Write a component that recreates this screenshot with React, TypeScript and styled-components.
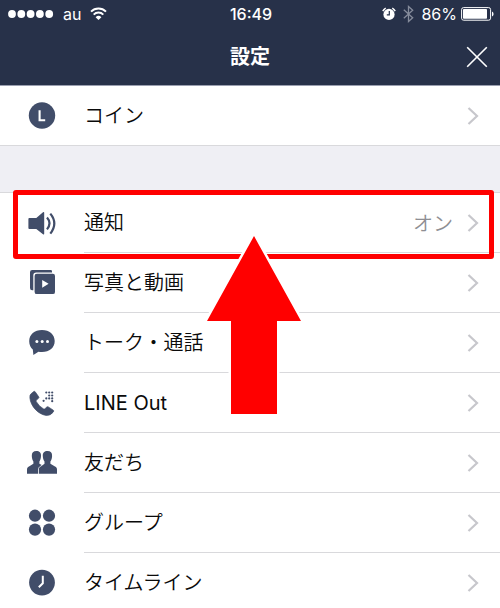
import React from "react";
import styled, { createGlobalStyle } from "styled-components";

const navy = "#273149";
const ink = "#414d69";
const line = "#d9d9dc";
const alertRed = "#ff0000";

const GlobalStyle = createGlobalStyle`
  *, *::before, *::after { box-sizing: border-box; }
  body {
    margin: 0;
    background: #fff;
    color: #0a0a0a;
    font-family: Inter, "Noto Sans CJK JP", sans-serif;
  }
`;

const Screen = styled.div`
  display: flex;
  flex-direction: column;
  height: 100vh;
  overflow: hidden;
`;

const Header = styled.header`
  flex: none;
  background: ${navy};
  color: #fff;
  border-bottom: 1px solid #9a9fb0;
`;

const StatusBar = styled.div`
  display: grid;
  grid-template-columns: 1fr auto 1fr;
  align-items: center;
  height: 28px;
  padding: 0 6px 0 8px;
  font-size: 16px;
  line-height: 20px;
`;

const StatusGroup = styled.div<{ $end?: boolean }>`
  display: flex;
  align-items: center;
  justify-content: ${(p) => (p.$end ? "flex-end" : "flex-start")};
  gap: ${(p) => (p.$end ? "7px" : "9px")};
`;

const BatteryLevel = styled.span`
  display: flex;
  align-items: center;
  gap: 4px;
`;

const Clock = styled.time`
  font-weight: 500;
`;

const TitleBar = styled.div`
  display: grid;
  grid-template-columns: 1fr auto 1fr;
  align-items: center;
  height: 57px;
  padding: 0 12px;
`;

const Title = styled.h1`
  grid-column: 2;
  margin: 0;
  font-size: 20px;
  line-height: 28px;
  font-weight: 700;
`;

const CloseButton = styled.button`
  justify-self: end;
  display: flex;
  padding: 0;
  border: 0;
  background: none;
  color: inherit;
`;

const Content = styled.main`
  flex: 1;
  min-height: 0;
  overflow: hidden;
  background: #efeff4;
`;

const Section = styled.ul`
  margin: 0 0 46px;
  padding: 0;
  list-style: none;
  background: #fff;
`;

const TopRule = styled.div`
  height: 1px;
  background: ${line};
`;

const Item = styled.li`
  position: relative;
`;

const RowButton = styled.button`
  display: flex;
  align-items: stretch;
  width: 100%;
  height: 60px;
  padding: 0;
  border: 0;
  background: none;
  color: inherit;
  font: inherit;
  font-size: 20px;
  line-height: 28px;
  text-align: left;
`;

const IconCell = styled.span<{ $ruled?: boolean }>`
  flex: none;
  display: flex;
  align-items: center;
  justify-content: center;
  width: 84px;
  border-bottom: 1px solid ${(p) => (p.$ruled ? line : "transparent")};
`;

const RowBody = styled.span`
  flex: 1;
  display: flex;
  align-items: center;
  gap: 14px;
  padding-right: 21px;
  border-bottom: 1px solid ${line};
`;

const Label = styled.span`
  flex: 1;
  font-family: Inter, "Noto Sans CJK JP DemiLight", "Noto Sans CJK JP", sans-serif;
`;

const Value = styled.span`
  color: #8e8e93;
  font-family: "Noto Sans CJK JP DemiLight", "Noto Sans CJK JP", sans-serif;
`;

const Highlight = styled.div`
  position: absolute;
  z-index: 1;
  top: -3px;
  bottom: -6px;
  left: 13px;
  right: 6px;
  border: 5px solid ${alertRed};
  border-radius: 3px;
  pointer-events: none;
`;

const Pointer = styled.svg`
  position: absolute;
  z-index: 2;
  top: 37px;
  left: calc(50% - 50px);
  pointer-events: none;
`;

const Wifi = () => (
  <svg width="17" height="14" viewBox="0 0 17 14" fill="none" stroke="#fff" strokeWidth="2" aria-label="Wi-Fi">
    <path d="M1 4.600a10.700 10.700 0 0 1 15 0" />
    <path d="M3.700 7.600a6.800 6.800 0 0 1 9.600 0" />
    <path d="M8.500 13 5.600 10.200a4.200 4.200 0 0 1 5.800 0z" fill="#fff" stroke="none" />
  </svg>
);

const Signal = () => (
  <svg width="46" height="8" viewBox="0 0 46 8" fill="#fff" aria-label="signal">
    {[4, 13.3, 22.6, 31.9, 41.2].map((x) => (
      <circle key={x} cx={x} cy="4" r="3.900" />
    ))}
  </svg>
);

const Alarm = () => (
  <svg width="14" height="14" viewBox="0 0 14 14" aria-label="alarm">
    <circle cx="7" cy="7.400" r="5.600" fill="#fff" />
    <path d="M.8 4.200A7 7 0 0 1 3.700 1.200M10.300 1.200a7 7 0 0 1 2.900 3" fill="none" stroke="#fff" strokeWidth="1.500" />
    <path d="M7.300 4v3.800H4.800" fill="none" stroke={navy} strokeWidth="1.200" />
  </svg>
);

const Bluetooth = () => (
  <svg width="11" height="18" viewBox="0 0 11 18" fill="none" stroke="#858b9b" strokeWidth="1.300" aria-label="Bluetooth">
    <path d="M.8 4.800 9.700 12.700 5.500 16.500V1.500l4.200 3.800-8.900 7.900" />
  </svg>
);

const Battery = () => (
  <svg width="33" height="14" viewBox="0 0 33 14" aria-label="battery">
    <rect x=".6" y=".6" width="29" height="12.600" rx="2" fill="none" stroke="#fff" />
    <rect x="2" y="2" width="24" height="9.800" rx=".8" fill="#fff" />
    <path d="M31 4.600q1.600.6 1.600 2.400T31 9.400z" fill="#fff" />
  </svg>
);

const Cross = () => (
  <svg width="22" height="22" viewBox="0 0 22 22" fill="none" stroke="#fff" strokeWidth="1.600">
    <path d="m1.200 1.200 19.600 19.600M20.800 1.200 1.200 20.800" />
  </svg>
);

const Chevron = () => (
  <svg width="12" height="18" viewBox="0 0 12 18" fill="none" stroke="#c7c7cc" strokeWidth="2.200">
    <path d="m1.500 1 8.500 8-8.500 8" />
  </svg>
);

const IconSvg = ({ children }: { children: React.ReactNode }) => (
  <svg width="30" height="30" viewBox="0 0 30 30" fill={ink} aria-hidden="true">
    {children}
  </svg>
);

const CoinIcon = () => (
  <IconSvg>
    <circle cx="15" cy="14.500" r="13.200" />
    <path d="M12.600 9.300v9.900h5.600" fill="none" stroke="#fff" strokeWidth="2.100" />
  </IconSvg>
);

const SpeakerIcon = () => (
  <IconSvg>
    <path d="M2.300 10h7L16 4.300q1.200-.8 1.200.5v21q0 1.300-1.200.5l-6.700-5.300h-7q-.9 0-.9-.9v-9.200q0-.9.900-.9z" />
    <path d="M20 9.600q5 5.600 0 11.800M23.300 5.600q8 9.600 0 20" fill="none" stroke={ink} strokeWidth="2.200" />
  </IconSvg>
);

const MediaIcon = () => (
  <IconSvg>
    <path d="M5.200 2h18.600q1.200 0 1.200 1.200v1.200H9.300Q6.300 4.400 6.300 7.200v15H5.200Q3 22.200 3 20V4.200Q3 2 5.200 2z" />
    <rect x="7.600" y="5.700" width="20.400" height="20.400" rx="2.200" />
    <path d="M15.200 11.900v7.800l6.400-3.900z" fill="#fff" />
  </IconSvg>
);

const TalkIcon = () => (
  <IconSvg>
    <path d="M15 2C7.600 2 2.200 6.500 2.200 13.200c0 3.600 1.400 6.400 3.600 8.200L6.400 27l5-3.200c1 .2 2.300.3 3.600.3 7.400 0 12.700-4.300 12.700-11C27.700 6.500 22.400 2 15 2z" />
    <circle cx="9.900" cy="13.400" r="1.500" fill="#fff" />
    <circle cx="15.200" cy="13.400" r="1.500" fill="#fff" />
    <circle cx="20.500" cy="13.400" r="1.500" fill="#fff" />
  </IconSvg>
);

const outDots = [
  [19.3, 4.5], [22.2, 4.5], [25.2, 4.5],
  [22.2, 7.5], [25.2, 7.5],
  [19.3, 10.4], [22.2, 10.4], [25.2, 10.4],
  [16.6, 12.8], [25.2, 13.2],
];

const CallIcon = () => (
  <IconSvg>
    <path
      d="M3.800 6 6.700 3.600q.8-.6 1.500.2l3.500 5q.6.9-.2 1.500l-2 1.700q-.8.700-.2 1.700 2.600 4.400 7 7.100 1 .6 1.700-.1l1.800-1.700q.7-.6 1.500-.1l5 3.300q.9.600.2 1.500-2.800 4.200-7.400 3.700C11.200 26.300 3.600 18.200 2.900 9.900Q2.600 7.300 3.800 6z"
      stroke={ink}
      strokeWidth=".7"
    />
    {outDots.map(([x, y]) => (
      <circle key={`${x}-${y}`} cx={x} cy={y} r="1.100" />
    ))}
  </IconSvg>
);

const FriendsIcon = () => (
  <IconSvg>
    <path d="M4.800 8C4.600 4.600 6.400 3 9.400 3s4.800 1.600 4.600 5c-.1 2.600-.8 4.300-1.600 5.400v2.400l2.800 1.500v8.500H0v-4c0-1.600.6-2.500 2-3.200l4.400-2.800v-2.400C5.600 12.300 4.900 10.600 4.800 8z" />
    <path
      d="M15.800 8c-.2-3.400 1.600-5 4.700-5s4.800 1.600 4.600 5c-.1 2.600-.8 4.300-1.700 5.400v2.400l4.600 2.800c1.400.700 2 1.600 2 3.200v4H11.800v-4c0-1.600.6-2.500 2-3.200l3.700-2.800v-2.400c-.9-1.100-1.600-2.800-1.700-5.400z"
      stroke="#fff"
      strokeWidth="1.600"
      paintOrder="stroke"
    />
  </IconSvg>
);

const GroupIcon = () => (
  <IconSvg>
    <circle cx="8" cy="7.700" r="6.100" />
    <circle cx="22" cy="7.700" r="6.100" />
    <circle cx="8" cy="21.600" r="6.100" />
    <circle cx="22" cy="21.600" r="6.100" />
  </IconSvg>
);

const TimelineIcon = () => (
  <IconSvg>
    <circle cx="15" cy="14.600" r="12.900" />
    <path d="M15.800 7.700v7.600l-4 3.900" fill="none" stroke="#fff" strokeWidth="2" />
  </IconSvg>
);

type RowProps = {
  label: string;
  icon: React.ReactNode;
  value?: string;
  ruled?: boolean;
  marked?: boolean;
};

const Row = ({ label, icon, value, ruled, marked }: RowProps) => (
  <Item>
    <RowButton type="button">
      <IconCell $ruled={ruled}>{icon}</IconCell>
      <RowBody>
        <Label>{label}</Label>
        {value && <Value>{value}</Value>}
        <Chevron />
      </RowBody>
    </RowButton>
    {marked && (
      <>
        <Highlight />
        <Pointer width="108" height="188" viewBox="0 0 108 188" aria-hidden="true">
          <path
            d="M54 6 101 91H77v93H31V91H7z"
            fill={alertRed}
            stroke="#fff"
            strokeWidth="5"
            paintOrder="stroke"
          />
        </Pointer>
      </>
    )}
  </Item>
);

const settings: RowProps[] = [
  { label: "通知", icon: <SpeakerIcon />, value: "オン", marked: true },
  { label: "写真と動画", icon: <MediaIcon /> },
  { label: "トーク・通話", icon: <TalkIcon /> },
  { label: "LINE Out", icon: <CallIcon /> },
  { label: "友だち", icon: <FriendsIcon /> },
  { label: "グループ", icon: <GroupIcon /> },
  { label: "タイムライン", icon: <TimelineIcon /> },
];

export default function App() {
  return (
    <Screen lang="ja">
      <GlobalStyle />
      <Header>
        <StatusBar>
          <StatusGroup>
            <Signal />
            <span>au</span>
            <Wifi />
          </StatusGroup>
          <Clock>16:49</Clock>
          <StatusGroup $end>
            <Alarm />
            <Bluetooth />
            <BatteryLevel>
              <span>86%</span>
              <Battery />
            </BatteryLevel>
          </StatusGroup>
        </StatusBar>
        <TitleBar>
          <Title>設定</Title>
          <CloseButton type="button" aria-label="閉じる">
            <Cross />
          </CloseButton>
        </TitleBar>
      </Header>
      <Content>
        <Section>
          <Row label="コイン" icon={<CoinIcon />} ruled />
        </Section>
        <TopRule />
        <Section>
          {settings.map((s) => (
            <Row key={s.label} {...s} />
          ))}
        </Section>
      </Content>
    </Screen>
  );
}
